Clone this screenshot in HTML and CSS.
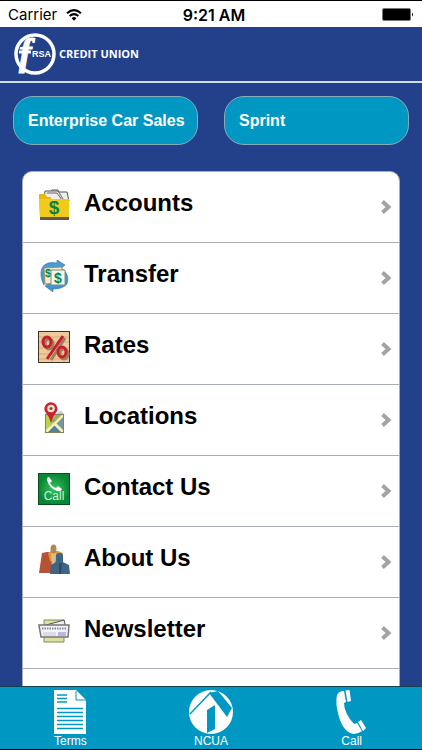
FILE: index.html
```html
<!DOCTYPE html>
<html lang="en">

<head>
    <meta charset="UTF-8">
    <meta name="viewport" content="width=device-width, initial-scale=1">
    <title>FRSA Credit Union</title>
    <link rel="stylesheet" href="styles.css">
</head>

<body>

    <div class="status-bar">
        <div class="carrier">
            <span>Carrier</span>
            <svg width="16" height="12" viewBox="0 0 16 12" fill="none" stroke="#000" stroke-width="2">
                <path d="M1 4.300Q8 -2 15 4.300M3.600 7Q8 3.200 12.400 7" />
                <path d="M5.600 9.200Q8 7 10.400 9.200L8 11.800z" fill="#000" stroke="none" />
            </svg>
        </div>
        <div class="time">9:21 AM</div>
        <div class="battery">
            <svg width="32" height="13" viewBox="0 0 32 13">
                <rect x="0.500" y="0.500" width="28" height="12" rx="1.500" fill="#000" stroke="#777" />
                <path d="M30 4.500q2 2 0 4z" fill="#000" />
            </svg>
        </div>
    </div>

    <header class="header">
        <svg class="logo" width="42" height="44" viewBox="0 0 42 44">
            <circle cx="21" cy="22" r="19" fill="none" stroke="#fff" stroke-width="3.500" />
            <text class="logo-f" x="5" y="33">f</text>
            <path d="M5 20h12" stroke="#fff" stroke-width="3" />
            <text class="logo-rsa" x="18" y="25">RSA</text>
        </svg>
        <span class="brand">CREDIT UNION</span>
    </header>

    <main class="content">
        <div class="promos">
            <button class="promo" type="button">Enterprise Car Sales</button>
            <button class="promo" type="button">Sprint</button>
        </div>

        <ul class="menu">
            <li>
                <a class="menu-item" href="#accounts">
                    <svg class="icon" viewBox="0 0 32 32">
                        <path d="M6 10L7 2h6l1-1h6l1 2h8l2 9z" fill="#eee" stroke="#555" />
                        <path d="M9 4h10l5 7M13 2h7l5 8" fill="none" stroke="#666" />
                        <path d="M1 10V5h6l2 3h4v2h18v19H2z" fill="#e9b90a" />
                        <path d="M1 10h30v18H2z" fill="#f2ca1c" />
                        <path d="M2 28h29v3H2z" fill="#665640" />
                        <text class="dollar" x="16" y="25" font-size="19">$</text>
                    </svg>
                    <span class="label">Accounts</span>
                    <svg class="chevron" viewBox="0 0 12 16"><path d="M2.500 2.500L8.500 8l-6 5.500" /></svg>
                </a>
            </li>
            <li>
                <a class="menu-item" href="#transfer">
                    <svg class="icon" viewBox="0 0 32 32">
                        <path d="M6 25Q1 16 4 8Q8 1 19 3V0l8 5-7 6V7Q12 6 9 12z" fill="#4a9bd6" stroke="#2872ad" stroke-width=".6" />
                        <path d="M25 9Q32 16 29 24Q25 29 15 29v3l-8-6 7-5v3Q22 26 26 20z" fill="#4294ce" stroke="#2872ad" stroke-width=".6" />
                        <path d="M6 8l18-1v16L7 24z" fill="#f5edcc" stroke="#a48f58" />
                        <text class="dollar" x="10" y="17" font-size="11">$</text>
                        <path d="M13 10h14v15H13z" fill="#f1f7e9" stroke="#888" />
                        <text class="dollar" x="20" y="23" font-size="14">$</text>
                    </svg>
                    <span class="label">Transfer</span>
                    <svg class="chevron" viewBox="0 0 12 16"><path d="M2.500 2.500L8.500 8l-6 5.500" /></svg>
                </a>
            </li>
            <li>
                <a class="menu-item" href="#rates">
                    <svg class="icon" viewBox="0 0 32 32">
                        <rect x=".5" y=".5" width="31" height="31" fill="#eec99b" stroke="#40301f" />
                        <path d="M1 6h30M1 11h30M1 17h30M1 23h30M1 28h30" stroke="#d9ab79" />
                        <g fill="none" stroke="#9b8065" stroke-width="3">
                            <ellipse cx="11" cy="13" rx="4" ry="5" />
                            <ellipse cx="26" cy="23" rx="4" ry="5" />
                            <path d="M13 29L27 7" />
                        </g>
                        <g fill="none" stroke="#c51f2b" stroke-width="3">
                            <ellipse cx="9" cy="11" rx="4" ry="5" />
                            <ellipse cx="24" cy="21" rx="4" ry="5" />
                            <path d="M9 28L25 5" />
                        </g>
                    </svg>
                    <span class="label">Rates</span>
                    <svg class="chevron" viewBox="0 0 12 16"><path d="M2.500 2.500L8.500 8l-6 5.500" /></svg>
                </a>
            </li>
            <li>
                <a class="menu-item" href="#locations">
                    <svg class="icon" viewBox="0 0 32 32">
                        <rect x="7" y="12" width="19" height="19" fill="#78999b" />
                        <path d="M7 12h19L12 25l-5 6z" fill="#b8d54a" />
                        <path d="M7 31l9-13 10 13z" fill="#53819b" />
                        <path d="M26 12L7 31M15 20l11 11" stroke="#f5f0b8" stroke-width="3" />
                        <rect x="7.500" y="12.500" width="18" height="18" fill="none" stroke="#81865a" />
                        <path d="M14 20l10-10" stroke="#777" stroke-width="4" opacity=".4" />
                        <path d="M13 21Q11 14 7 9.500A6.500 6.500 0 1 1 19 9Q15 14 13 21z" fill="#c92235" />
                        <circle cx="13" cy="6.500" r="3.800" fill="#f4e4c8" />
                        <circle cx="13" cy="6.500" r="1.500" fill="#7a4b2b" />
                    </svg>
                    <span class="label">Locations</span>
                    <svg class="chevron" viewBox="0 0 12 16"><path d="M2.500 2.500L8.500 8l-6 5.500" /></svg>
                </a>
            </li>
            <li>
                <a class="menu-item" href="#contact">
                    <svg class="icon" viewBox="0 0 32 32">
                        <defs>
                            <radialGradient id="green">
                                <stop offset="0" stop-color="#35c561" />
                                <stop offset="1" stop-color="#098533" />
                            </radialGradient>
                        </defs>
                        <rect x=".5" y=".5" width="31" height="31" fill="url(#green)" stroke="#075020" />
                        <path d="M11 4l3 4-2 2q2 4 6 5l2-2 4 3q-1 3-5 2Q11 15 9 7q0-3 2-3z" fill="#fff" />
                        <text class="call-text" x="16" y="27">Call</text>
                    </svg>
                    <span class="label">Contact Us</span>
                    <svg class="chevron" viewBox="0 0 12 16"><path d="M2.500 2.500L8.500 8l-6 5.500" /></svg>
                </a>
            </li>
            <li>
                <a class="menu-item" href="#about">
                    <svg class="icon" viewBox="0 0 32 32">
                        <path d="M1 29l3-20 5-1h9v21z" fill="#b65236" />
                        <path d="M10 9l3-2h7l5 2v8H12z" fill="#db9c35" />
                        <path d="M13 9h5l-1 18h-3z" fill="#d8bd8c" />
                        <ellipse cx="15.500" cy="5" rx="3" ry="4.500" fill="#ad8a58" />
                        <path d="M12 30l1-9 5-3v-6q0-3 3.500-3t3.500 3v6l6 3 1 9z" fill="#3c6586" />
                        <path d="M21 19h3l-1 11h-2z" fill="#2d4b64" />
                    </svg>
                    <span class="label">About Us</span>
                    <svg class="chevron" viewBox="0 0 12 16"><path d="M2.500 2.500L8.500 8l-6 5.500" /></svg>
                </a>
            </li>
            <li>
                <a class="menu-item" href="#newsletter">
                    <svg class="icon" viewBox="0 0 32 32">
                        <path d="M6 5h20v22H6z" fill="#dce1a0" stroke="#858b5b" />
                        <path d="M1 12l25-7 2 8-26 2z" fill="#eee" stroke="#555" />
                        <path d="M1 10h30l-1 12H3z" fill="#f3f3fa" stroke="#777" stroke-width="1.500" />
                        <path d="M4 13.500h24" stroke="#888" stroke-width="2" stroke-dasharray="1.500 1" />
                        <path d="M5 18h13M5 20h13" stroke="#c6c6d7" />
                        <path d="M20 17h8v4h-8z" fill="#bdb5e2" />
                    </svg>
                    <span class="label">Newsletter</span>
                    <svg class="chevron" viewBox="0 0 12 16"><path d="M2.500 2.500L8.500 8l-6 5.500" /></svg>
                </a>
            </li>
            <li class="menu-end"></li>
        </ul>
    </main>

    <nav class="tab-bar">
        <a class="tab" href="#terms">
            <svg viewBox="0 0 44 44">
                <path d="M6 0h22l10 10v34H6z" fill="#fff" />
                <path d="M28 1v9h10" fill="none" stroke="#0098c3" />
                <path d="M9 5h10M9 8.500h10M9 12h10M9 18.500h26M9 22.500h26M9 26.500h26M9 30.500h26M9 34.500h26M9 38.500h26" stroke="#0098c3" stroke-width="1.500" />
            </svg>
            <span>Terms</span>
        </a>
        <a class="tab" href="#ncua">
            <svg viewBox="0 0 44 44">
                <circle cx="22" cy="22" r="22" fill="#fff" />
                <path d="M20 3l9-2 14 17-5 9z" fill="#0098c3" />
                <path d="M22 2L1 24" stroke="#0098c3" stroke-width="1.500" />
                <path d="M18 20l8-5v24l-8 4z" fill="#0098c3" />
            </svg>
            <span>NCUA</span>
        </a>
        <a class="tab" href="#call">
            <svg viewBox="0 0 44 44">
                <path d="M7 5Q9 1 14 1l2 11-2 1q0 10 10 21l3-1 5 8q-4 3-8 3Q14 43 9 27 5 13 7 5z" fill="#fff" />
                <path d="M15.500 .5l4-.5 1.500 11-3.500 1zM28 32l3-2 5 8-3 3z" fill="#fff" />
            </svg>
            <span>Call</span>
        </a>
    </nav>

</body>

</html>
```
FILE: styles.css
```css
* {
    box-sizing: border-box;
    margin: 0;
    padding: 0;
}

body {
    display: flex;
    flex-direction: column;
    height: 100vh;
    background: #22418a;
    font-family: "Liberation Sans", Arial, sans-serif;
    color: #000;
}

svg {
    display: block;
    flex: none;
}

/* Status bar */
.status-bar {
    display: grid;
    grid-template-columns: 1fr auto 1fr;
    align-items: center;
    flex: none;
    height: 27px;
    padding: 1px 8px 0;
    border-top: 1px solid #000;
    background: #fff;
    font-family: Inter, sans-serif;
    font-size: 15px;
}

.carrier {
    display: flex;
    align-items: center;
    gap: 9px;
}

.time {
    padding-left: 6px;
    font-size: 16px;
    font-weight: 600;
}

.battery {
    justify-self: end;
}

/* Header */
.header {
    display: flex;
    align-items: center;
    flex: none;
    gap: 3px;
    height: 56px;
    border-bottom: 2px solid #d3daea;
    padding: 0 14px;
    color: #fff;
}

.logo {
    fill: #fff;
}

.logo-f {
    font: italic bold 38px "Liberation Serif", serif;
    stroke: #fff;
    stroke-width: 1px;
}

.logo-rsa {
    font: bold 9px "Liberation Sans Narrow", "Liberation Sans", sans-serif;
}

.brand {
    padding-bottom: 2px;
    font: bold 11px "Open Sans", sans-serif;
}

/* Scrolling content */
.content {
    flex: 1;
    min-height: 0;
    overflow-y: auto;
    scrollbar-width: none;
    padding-top: 13px;
}

.promos {
    display: grid;
    grid-template-columns: repeat(2, minmax(0, 1fr));
    gap: 26px;
    padding: 0 13px;
}

.promo {
    height: 49px;
    padding: 0 14px;
    border: 1px solid #8baab8;
    border-radius: 20px;
    background: #0098c3;
    color: #fff;
    font: bold 16px "Liberation Sans", Arial, sans-serif;
    text-align: left;
    white-space: nowrap;
    cursor: pointer;
}

.menu {
    margin: 26px 22px;
    overflow: hidden;
    border: 1px solid #a9adb8;
    border-radius: 10px;
    background: #fff;
    list-style: none;
}

.menu-item {
    display: flex;
    align-items: center;
    gap: 14px;
    height: 71px;
    padding: 0 7px 0 15px;
    border-bottom: 1px solid #a9adb8;
    color: #000;
    text-decoration: none;
}

.menu-end {
    height: 71px;
}

.icon {
    width: 32px;
    height: 32px;
    margin-top: -4px;
}

.label {
    flex: 1;
    margin-top: -8px;
    font-size: 24px;
    font-weight: bold;
}

.chevron {
    width: 12px;
    height: 16px;
    fill: none;
    stroke: #a3a3a3;
    stroke-width: 4px;
}

.dollar {
    fill: #098345;
    font-family: "Liberation Sans", sans-serif;
    font-weight: bold;
    text-anchor: middle;
}

.call-text {
    fill: #c8f5cf;
    font-family: "Liberation Sans", sans-serif;
    font-size: 12px;
    text-anchor: middle;
}

/* Bottom tabs */
.tab-bar {
    display: grid;
    grid-template-columns: repeat(3, 1fr);
    flex: none;
    height: 64px;
    border-top: 1px solid #16424f;
    border-bottom: 1px solid #000;
    background: #0098c3;
}

.tab {
    display: flex;
    flex-direction: column;
    align-items: center;
    padding-top: 3px;
    color: #fff;
    font-size: 12px;
    line-height: 15px;
    text-decoration: none;
}

.tab svg {
    width: 44px;
    height: 44px;
}
```
